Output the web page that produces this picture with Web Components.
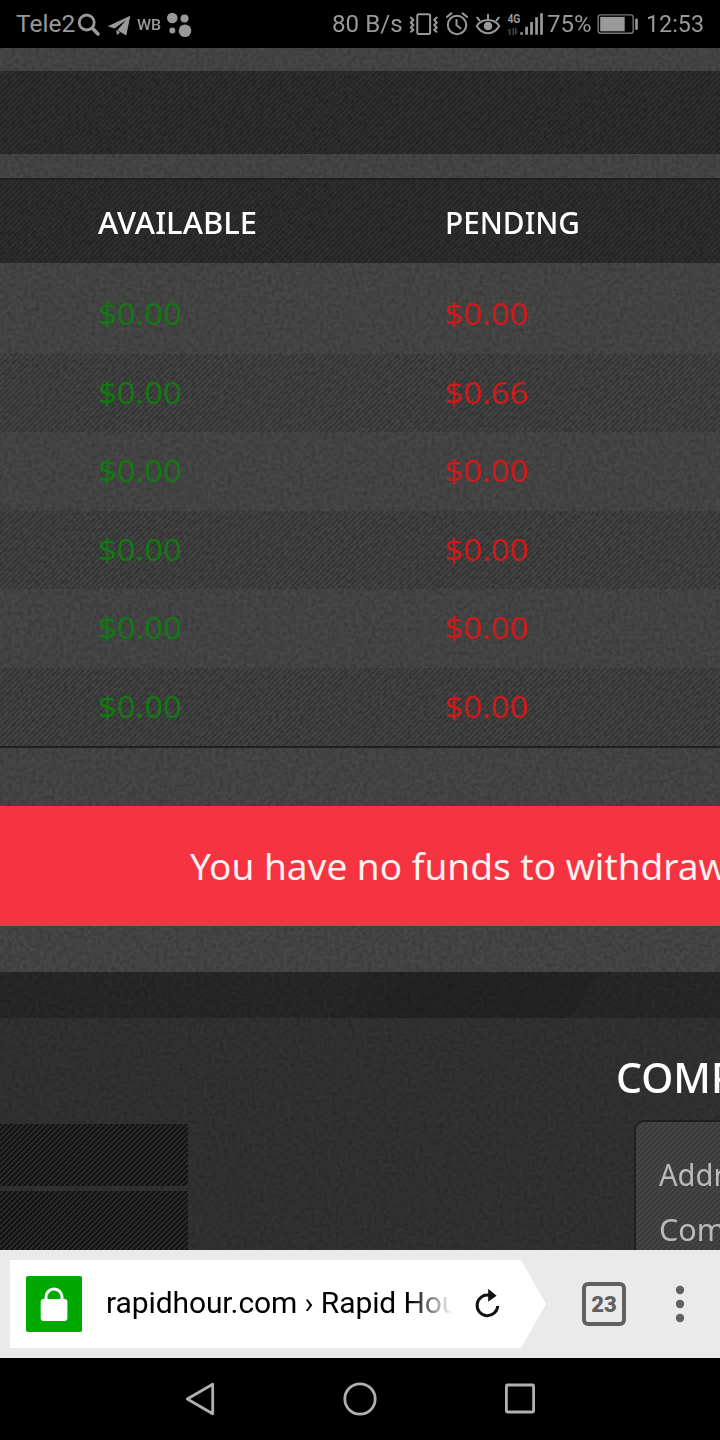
<!DOCTYPE html>
<html lang="en">
<head>
<meta charset="utf-8">
<meta name="viewport" content="width=device-width">
<title>Rapid Hour</title>
<style>
  body {
    margin: 0;
    background: #000;
    font-family: Roboto, sans-serif;
  }
</style>
</head>
<body>
<phone-screen>
  <status-bar slot="top"></status-bar>
  <site-page>
    <balance-table>
      <balance-row available="$0.00" pending="$0.00"></balance-row>
      <balance-row striped available="$0.00" pending="$0.66"></balance-row>
      <balance-row available="$0.00" pending="$0.00"></balance-row>
      <balance-row striped available="$0.00" pending="$0.00"></balance-row>
      <balance-row available="$0.00" pending="$0.00"></balance-row>
      <balance-row striped available="$0.00" pending="$0.00"></balance-row>
    </balance-table>
    <alert-banner><fit-text width="538">You have no funds to withdraw</fit-text></alert-banner>
    <site-footer slot="footer"></site-footer>
  </site-page>
  <url-bar slot="bottom" tabs="23">rapidhour.com › Rapid Hour</url-bar>
  <nav-bar slot="bottom"></nav-bar>
</phone-screen>

<script>
class BaseElement extends HTMLElement {
  constructor() {
    super();
    this._shadowRoot = this.attachShadow({ mode: 'open' });
  }

  connectedCallback() {
    this._shadowRoot.innerHTML = this.render();
  }
}

// One line of text, condensed or widened until it is `width` pixels wide
class FitText extends BaseElement {
  render() {
    return `
      <style>
        :host { display: block; flex: none; white-space: nowrap; }
        span { display: inline-block; transform-origin: 0 50%; }
      </style>
      <span><slot></slot></span>`;
  }

  connectedCallback() {
    super.connectedCallback();
    this.fit();
    requestAnimationFrame(() => this.fit());
  }

  fit() {
    const target = Number(this.getAttribute('width'));
    const $span = this._shadowRoot.querySelector('span');
    const natural = $span.offsetWidth;
    if (target && natural) {
      this.style.width = `${target}px`;
      $span.style.transform = `scaleX(${target / natural})`;
    }
  }
}

class PhoneScreen extends BaseElement {
  render() {
    return `
      <style>
        :host {
          display: flex;
          flex-direction: column;
          width: 720px;
          height: 1440px;
          overflow: hidden;
        }
        main { flex: 1; min-height: 0; overflow: hidden; }
      </style>
      <slot name="top"></slot>
      <main><slot></slot></main>
      <slot name="bottom"></slot>`;
  }
}

class StatusBar extends BaseElement {
  render() {
    return `
      <style>
        :host {
          display: flex;
          align-items: center;
          height: 48px;
          box-sizing: border-box;
          padding: 0 16px;
          background: #000;
          color: #999;
          font-size: 24.5px;
          line-height: 50px;
        }
        svg { display: block; flex: none; height: 48px; fill: #999; }
        .line { fill: none; stroke: #999; stroke-width: 2; stroke-linecap: round; stroke-linejoin: round; }
        .wb { font-size: 14px; font-weight: 500; margin: 2px 5px 0 6px; }
        .speed { margin-left: auto; }
        .percent { margin: 0 6px 0 3px; }
        .time { margin-left: 7px; }
      </style>
      <fit-text width="59">Tele2</fit-text>
      <svg width="56" viewBox="75 0 56 48">
        <circle class="line" style="stroke-width:2.8" cx="86.7" cy="22.5" r="7.5"/>
        <path class="line" style="stroke-width:3.6" d="M92.7 28.5L98 34"/>
        <path d="M130.3 15.8L107.7 26.2L114.6 28.6L126 20L117.3 30.2L126.3 35.4Z"/>
        <path d="M116 30L117 35.3L120 32.2Z"/>
      </svg>
      <fit-text class="wb" width="24">WB</fit-text>
      <svg width="26" viewBox="166 0 26 48">
        <circle cx="172.3" cy="18" r="5.3"/>
        <circle cx="184.5" cy="18.5" r="4"/>
        <circle cx="172.3" cy="30.6" r="3"/>
        <circle cx="185" cy="30.8" r="6.3"/>
      </svg>

      <fit-text class="speed" width="71">80 B/s</fit-text>
      <svg width="141" viewBox="404 0 141 48">
        <rect class="line" x="418.3" y="14.3" width="12.8" height="19.6" rx="1.5"/>
        <path class="line" d="M411.8 17.6l2.6 2.4l-2.6 2.5l2.6 2.5l-2.6 2.5l2.6 2.5l-2.4 1.8M437.8 17.6l-2.6 2.4l2.6 2.5l-2.6 2.5l2.6 2.5l-2.6 2.5l2.4 1.8"/>
        <circle class="line" cx="458" cy="25" r="9.2"/>
        <path class="line" d="M457.5 20v5.2l4 3M447.8 17l4.6-3.6M468.2 17l-4.6-3.6"/>
        <path class="line" d="M477.8 26C483 18 495 18 500.2 26C495 35.5 483 35.5 477.8 26ZM489 18.5v-3.8M480.3 20.2l-2-2.6M497.7 20.2l2-2.6"/>
        <circle cx="489" cy="26" r="4.3"/>
        <text x="508.4" y="23.3" font-size="12.5" font-weight="700" textLength="13" lengthAdjust="spacingAndGlyphs">4G</text>
        <path fill="#444" d="M511.5 28v7h-1.6v-4h-1.8zM513.6 28h1.5v7h-1.5zM516 28h1.5v3.4h1.9l-3.4 3.6z"/>
        <path d="M521.3 32.3h2.6v2.4h-2.6zM526.2 26.7h2.7v8h-2.7zM531.2 22h2.7v12.7h-2.7zM536.2 17.3h2.7v17.4h-2.7zM541.2 13.3h2.7v21.4h-2.7z"/>
      </svg>
      <fit-text class="percent" width="44">75%</fit-text>
      <svg width="42" viewBox="598 0 42 48">
        <rect class="line" style="stroke:#777;stroke-width:1.4" x="599.2" y="14.9" width="35" height="18.4" rx="2.5"/>
        <rect x="601.2" y="16.9" width="24.5" height="14.4"/>
        <rect x="636.2" y="18.5" width="2.6" height="11.5" rx="1"/>
      </svg>
      <fit-text class="time" width="58">12:53</fit-text>`;
  }
}

class SitePage extends BaseElement {
  render() {
    return `
      <style>
        :host {
          display: flex;
          flex-direction: column;
          position: relative;
          isolation: isolate;
          height: 1202px;
          overflow: hidden;
          background: #464646;
          color: #fff;
          font-family: "Noto Sans", sans-serif;
          --twill: repeating-linear-gradient(135deg, rgba(0, 0, 0, .16) 0 1.6px, transparent 2.2px 3.2px, rgba(0, 0, 0, .16) 3.75px);
        }
        .band {
          height: 83px;
          margin: 23px 0 24px;
          background: var(--twill), rgba(0, 0, 0, .3);
        }
        .grain { position: absolute; inset: 0; z-index: -1; }
      </style>
      <div class="band"></div>
      <slot></slot>
      <slot name="footer"></slot>
      <svg class="grain" width="720" height="1202">
        <filter id="grain" x="0" y="0" width="100%" height="100%">
          <feTurbulence type="fractalNoise" baseFrequency=".25" numOctaves="2" seed="4"/>
          <feColorMatrix values="0 0 0 0 0  0 0 0 0 0  0 0 0 0 0  .35 0 0 0 -.12"/>
        </filter>
        <rect width="720" height="1202" filter="url(#grain)"/>
      </svg>`;
  }
}

class BalanceTable extends BaseElement {
  render() {
    return `
      <style>
        :host { display: block; border-bottom: 2px solid #202020; }
        header {
          display: grid;
          grid-template-columns: 347px 1fr;
          align-items: center;
          height: 85px;
          box-sizing: border-box;
          padding: 2px 0 0 98px;
          border-top: 2px solid #202020;
          background: var(--twill), rgba(0, 0, 0, .3);
          font-size: 30px;
          font-weight: 500;
          line-height: 40px;
        }
        section { padding-top: 12px; }
      </style>
      <header>
        <fit-text width="159">AVAILABLE</fit-text>
        <fit-text width="135">PENDING</fit-text>
      </header>
      <section><slot></slot></section>`;
  }
}

class BalanceRow extends BaseElement {
  render() {
    return `
      <style>
        :host {
          display: grid;
          grid-template-columns: 347px 1fr;
          align-items: center;
          height: 78.5px;
          padding-left: 98px;
          font-size: 30px;
          line-height: 40px;
        }
        :host([striped]) { background: var(--twill); }
        .available { color: #127812; }
        .pending { color: #d01a1a; }
      </style>
      <fit-text class="available" width="84">${this.getAttribute('available')}</fit-text>
      <fit-text class="pending" width="84">${this.getAttribute('pending')}</fit-text>`;
  }
}

class AlertBanner extends BaseElement {
  render() {
    return `
      <style>
        :host {
          display: flex;
          align-items: center;
          height: 120px;
          box-sizing: border-box;
          margin: 58px 0 46px;
          padding-left: 190px;
          background: #f63340;
          color: #fff0f1;
          font-size: 37px;
          line-height: 50px;
          overflow: hidden;
        }
      </style>
      <slot></slot>`;
  }
}

class SiteFooter extends BaseElement {
  render() {
    return `
      <style>
        :host { display: block; flex: 1; background: rgba(0, 0, 0, .28); overflow: hidden; }
        .edge {
          height: 46px;
          background: linear-gradient(120deg, transparent 45%, rgba(0, 0, 0, .1) 55% 80%, transparent 80.3%), rgba(0, 0, 0, .2);
        }
        .columns { display: flex; justify-content: space-between; height: 186px; }
        .links { display: grid; grid-template-rows: 62px 62px; gap: 5px; width: 188px; padding-top: 106px; }
        .links div { background: repeating-linear-gradient(135deg, #121212 0 1.4px, #2c2c2c 2px 3.1px, #121212 3.75px); }
        .company { width: 104px; }
        h2 { margin: 0; padding-top: 30px; height: 72px; font-size: 42px; font-weight: 500; line-height: 58px; }
        .card {
          width: 200px;
          height: 200px;
          margin-left: 18px;
          box-sizing: border-box;
          padding: 25px 0 0 23px;
          border: 2px solid #1f1f1f;
          border-radius: 10px;
          background: var(--twill), #464646;
          color: #bababa;
          font-size: 30px;
          line-height: 55px;
        }
      </style>
      <div class="edge"></div>
      <div class="columns">
        <div class="links"><div></div><div></div></div>
        <div class="company">
          <h2><fit-text width="120">COMP</fit-text></h2>
          <div class="card">
            <fit-text width="66">Addr</fit-text>
            <fit-text width="66">Com</fit-text>
          </div>
        </div>
      </div>`;
  }
}

class UrlBar extends BaseElement {
  render() {
    return `
      <style>
        :host {
          display: flex;
          align-items: center;
          height: 108px;
          box-sizing: border-box;
          padding-left: 10px;
          background: #eaeaea;
        }
        .address {
          display: flex;
          align-items: center;
          width: 536px;
          height: 88px;
          box-sizing: border-box;
          padding-left: 16px;
          background: #fff;
          clip-path: polygon(0 0, 511px 0, 100% 50%, 511px 100%, 0 100%);
        }
        .lock { width: 56px; height: 56px; border-radius: 2px; background: #00a800; }
        .title {
          width: 346px;
          margin: -2px 0 0 24px;
          overflow: hidden;
          color: #000;
          font-size: 30px;
          line-height: 44px;
          letter-spacing: -.1px;
          white-space: nowrap;
          -webkit-mask-image: linear-gradient(90deg, #000 305px, transparent 346px);
          mask-image: linear-gradient(90deg, #000 305px, transparent 346px);
        }
        .reload { margin-left: 20px; }
        .tabs {
          width: 44px;
          height: 44px;
          box-sizing: border-box;
          margin-left: 36px;
          border: 4px solid #616161;
          border-radius: 6px;
          color: #616161;
          font-size: 22px;
          font-weight: 900;
          line-height: 38px;
          text-align: center;
        }
        .more { margin-left: 44px; fill: #616161; }
      </style>
      <div class="address">
        <svg class="lock" viewBox="0 0 56 56">
          <path d="M20 26v-5a8 8 0 0 1 16 0v5" fill="none" stroke="#fff" stroke-width="3"/>
          <rect x="14.7" y="23" width="26.7" height="22" rx="3" fill="#fff"/>
        </svg>
        <div class="title"><slot></slot></div>
        <svg class="reload" width="32" height="32" viewBox="472 1288 32 32">
          <path d="M489 1295.2A10.3 10.3 0 1 0 497.7 1306" fill="none" stroke="#111" stroke-width="3"/>
          <path d="M488.2 1288.8l8.4 6.9l-8.4 6z" fill="#111"/>
        </svg>
      </div>
      <div class="tabs">${this.getAttribute('tabs')}</div>
      <svg class="more" width="20" height="44" viewBox="0 0 20 44">
        <circle cx="10" cy="8" r="4.2"/>
        <circle cx="10" cy="22" r="4.2"/>
        <circle cx="10" cy="36" r="4.2"/>
      </svg>`;
  }
}

class NavBar extends BaseElement {
  render() {
    return `
      <style>
        :host {
          display: flex;
          align-items: center;
          justify-content: center;
          gap: 120px;
          height: 82px;
          background: #000;
        }
        svg { fill: none; stroke: #b0b0b0; stroke-width: 2.8; stroke-linejoin: round; }
      </style>
      <svg width="40" height="40"><path d="M7.3 20L32.7 5.2V34.8Z"/></svg>
      <svg width="40" height="40"><circle cx="20" cy="20" r="15.2"/></svg>
      <svg width="40" height="40"><rect x="6.4" y="6" width="27.2" height="27" rx="1"/></svg>`;
  }
}

window.customElements.define('fit-text', FitText);
window.customElements.define('phone-screen', PhoneScreen);
window.customElements.define('status-bar', StatusBar);
window.customElements.define('site-page', SitePage);
window.customElements.define('balance-table', BalanceTable);
window.customElements.define('balance-row', BalanceRow);
window.customElements.define('alert-banner', AlertBanner);
window.customElements.define('site-footer', SiteFooter);
window.customElements.define('url-bar', UrlBar);
window.customElements.define('nav-bar', NavBar);
</script>
</body>
</html>
